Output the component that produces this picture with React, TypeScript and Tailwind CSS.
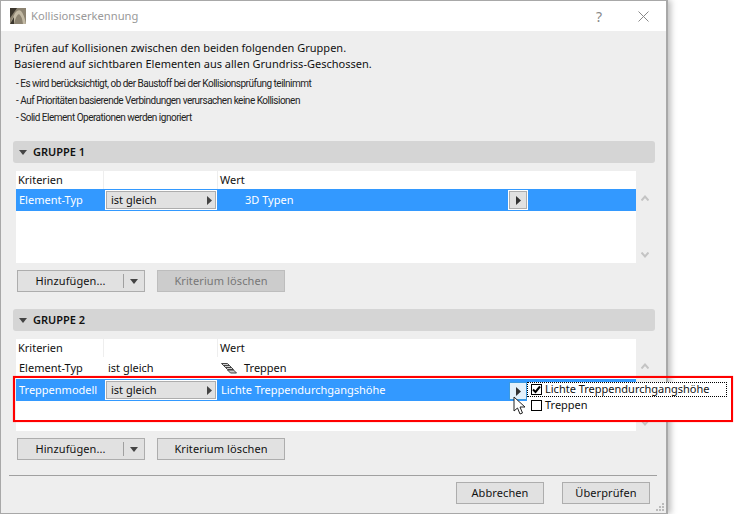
const font = { fontFamily: '"Noto Sans", sans-serif' };

function Tri({ dir = "down", color = "#444" }: { dir?: "down" | "right"; color?: string }) {
  return dir === "down" ? (
    <svg width="8" height="5" viewBox="0 0 8 5"><path d="M0 0h8L4 5z" fill={color} /></svg>
  ) : (
    <svg width="5" height="9" viewBox="0 0 5 9"><path d="M0 0l5 4.5L0 9z" fill={color} /></svg>
  );
}

function Chevrons({ className }: { className: string }) {
  return (
    <div className={`flex flex-col items-center justify-between ${className}`}>
      <svg width="8" height="6" viewBox="0 0 8 6"><path d="M0.5 5.5L4 1.5L7.5 5.5" fill="none" stroke="#c4c4c4" strokeWidth="2" /></svg>
      <svg width="8" height="6" viewBox="0 0 8 6"><path d="M0.5 0.5L4 4.5L7.5 0.5" fill="none" stroke="#c4c4c4" strokeWidth="2" /></svg>
    </div>
  );
}

function Btn({ children, className = "", disabled }: { children: React.ReactNode; className?: string; disabled?: boolean }) {
  return (
    <div className={`h-[22px] flex items-center justify-center border text-[11px] tracking-[0.1px] ${disabled ? "bg-[#cccccc] border-[#bdbdbd] text-[#777]" : "bg-[#e1e1e1] border-[#adadad] text-[#111]"} ${className}`}>
      {children}
    </div>
  );
}

function Select() {
  return (
    <div className="w-[110px] h-[18px] ml-[1px] bg-[#e1e1e1] border border-[#adadad] outline outline-1 outline-white flex items-center justify-between pl-[4px] pr-[3px] text-[11px] text-[#111]">
      <span>ist gleich</span>
      <Tri dir="right" />
    </div>
  );
}

function Head({ title }: { title: string }) {
  return (
    <div className="ml-[12px] w-[642px] h-[22px] rounded-[3px] bg-[#d5d5d5] flex items-center pl-[6px] gap-[6px]">
      <Tri />
      <span className="text-[11px] font-semibold text-[#111]">{title}</span>
    </div>
  );
}

function ColHead() {
  return (
    <div className="flex h-[18px] text-[11px] text-[#111] leading-[18px]">
      <div className="w-[88px] pl-[2px] border-r border-[#eeeeee]">Kriterien</div>
      <div className="w-[114px] border-r border-[#eeeeee]" />
      <div className="pl-[2px]">Wert</div>
    </div>
  );
}

function ArrowBox({ hot }: { hot?: boolean }) {
  return (
    <div className={`w-[18px] h-[18px] flex items-center justify-center border ${hot ? "bg-[#e3f1fb] border-[#3c9ae0]" : "bg-[#e1e1e1] border-[#adadad] outline outline-1 outline-white"}`}>
      <Tri dir="right" color="#333" />
    </div>
  );
}

function AddRow({ disabled }: { disabled?: boolean }) {
  return (
    <div className="flex mt-[7px] ml-[16px] gap-[12px]">
      <div className="w-[128px] h-[22px] flex items-center bg-[#e1e1e1] border border-[#adadad] text-[11px] tracking-[0.1px] text-[#111]">
        <span className="w-[105px] text-center">Hinzufügen...</span>
        <span className="w-px h-[14px] bg-[#a0a0a0]" />
        <span className="flex-1 flex justify-center"><Tri /></span>
      </div>
      <Btn disabled={disabled} className="w-[128px]">Kriterium löschen</Btn>
    </div>
  );
}

export default function App() {
  return (
    <div className="relative w-[734px] h-[514px] bg-white overflow-hidden" style={font}>
      <div className="w-[668px] h-[514px] bg-[#eeeeee] border border-[#a8a8a8] border-r-2 shadow-[3px_0_6px_rgba(0,0,0,0.25)] flex flex-col">
        <div className="h-[30px] shrink-0 bg-white flex items-center pl-[9px] pr-[17px]">
          <svg width="16" height="16" viewBox="0 0 16 16">
            <rect width="16" height="16" fill="#8c8371" />
            <path d="M0 16L5 5Q8 1 11 3Q14 6 16 16H13Q12 8 9 6Q6 7 4 16z" fill="#c2b9a4" />
            <path d="M0 0h7L0 10z" fill="#3a352c" />
            <path d="M0 16L4 9V16z" fill="#3a352c" />
          </svg>
          <span className="ml-[5px] text-[11.2px] text-[#999]">Kollisionserkennung</span>
          <span className="ml-auto text-[14px] text-[#888] mr-[36px]">?</span>
          <svg width="11" height="11" viewBox="0 0 11 11"><path d="M0.5 0.5l10 10M10.5 0.5l-10 10" stroke="#888" strokeWidth="1" /></svg>
        </div>

        <div className="pl-[13px] pt-[9px] text-[11px] leading-[16px] text-[#111]">
          <div>Prüfen auf Kollisionen zwischen den beiden folgenden Gruppen.</div>
          <div>Basierend auf sichtbaren Elementen aus allen Grundriss-Geschossen.</div>
        </div>
        <div className="pl-[15px] pt-[3px] text-[10px] tracking-[-0.5px] text-[#222] flex flex-col" style={{ fontFamily: "Roboto, sans-serif" }}>
          <div className="h-[17px] leading-[17px]">- Es wird berücksichtigt, ob der Baustoff bei der Kollisionsprüfung teilnimmt</div>
          <div className="h-[17px] leading-[17px]">- Auf Prioritäten basierende Verbindungen verursachen keine Kollisionen</div>
          <div className="h-[17px] leading-[17px]">- Solid Element Operationen werden ignoriert</div>
        </div>

        <div className="mt-[15px]"><Head title="GRUPPE 1" /></div>
        <div className="flex mt-[8px]">
          <div className="ml-[15px] w-[620px] h-[92px] bg-white">
            <ColHead />
            <div className="h-[22px] bg-[#3399ff] flex items-center text-[11px] text-white">
              <div className="w-[89px] pl-[3px]">Element-Typ</div>
              <Select />
              <div className="w-[293px] pl-[29px]">3D Typen</div>
              <ArrowBox />
            </div>
          </div>
          <Chevrons className="w-[18px] h-[63px] mt-[24px]" />
        </div>
        <AddRow disabled />

        <div className="mt-[17px]"><Head title="GRUPPE 2" /></div>
        <div className="flex mt-[8px]">
          <div className="ml-[15px] w-[620px] h-[92px] bg-white">
            <ColHead />
            <div className="h-[22px] flex items-center text-[11px] text-[#111]">
              <div className="w-[89px] pl-[3px]">Element-Typ</div>
              <div className="w-[113px] pl-[3px]">ist gleich</div>
              <div className="pl-[3px] flex items-center gap-[6px]">
                <svg width="17" height="12" viewBox="0 0 17 12" fill="#ccc" stroke="#444" strokeWidth="1">
                  <path d="M0.5 1.5h6l2 2h-6zM2.5 3.5h6l2 2h-6zM4.5 5.5h6l2 2h-6zM6.5 8h6l3 3h-6z" />
                </svg>
                Treppen
              </div>
            </div>
            <div className="h-[22px] bg-[#3399ff] flex items-center text-[11px] text-white">
              <div className="w-[89px] pl-[3px]">Treppenmodell</div>
              <Select />
              <div className="w-[290px] pl-[5px]">Lichte Treppendurchgangshöhe</div>
            </div>
          </div>
          <Chevrons className="w-[18px] h-[63px] mt-[24px]" />
        </div>
        <AddRow />

        <div className="mt-[15px] ml-[8px] w-[648px] h-px bg-[#a0a0a0]" />
        <div className="flex justify-end mt-[6px] pr-[16px] gap-[18px]">
          <Btn className="w-[88px]">Abbrechen</Btn>
          <Btn className="w-[88px]">Überprüfen</Btn>
        </div>
      </div>

      {/* popup list, hover arrow, annotation and cursor lie over the dialog */}
      <div className="absolute left-[509px] top-[382px]"><ArrowBox hot /></div>
      <div className="absolute left-[527px] top-[382px] w-[205px] h-[39px] bg-white text-[11px] text-[#111]">
        <div className="flex items-center w-[200px] h-[15px] border border-dotted border-black pl-[3px] gap-[3px]">
          <span className="w-[11px] h-[11px] border border-black flex items-center justify-center">
            <svg width="9" height="9" viewBox="0 0 9 9"><path d="M1 4.5L3.5 7L8 1.5" fill="none" stroke="#000" strokeWidth="2" /></svg>
          </span>
          Lichte Treppendurchgangshöhe
        </div>
        <div className="flex items-center h-[14px] mt-[1px] pl-[4px] gap-[3px]">
          <span className="w-[11px] h-[11px] border border-black" />
          Treppen
        </div>
      </div>
      <div className="absolute left-[13px] top-[376px] w-[720px] h-[46px] border-2 border-[#ff0000] shadow-[0_0_1px_rgba(255,0,0,0.5)]" />
      <svg className="absolute left-[513px] top-[396px]" width="14" height="20" viewBox="0 0 14 20">
        <path d="M1 1v14l3.5-3 2.5 6 2.5-1-2.5-6h5z" fill="#fff" stroke="#222" strokeWidth="1" />
      </svg>
      <svg className="absolute left-[656px] top-[503px]" width="9" height="9" viewBox="0 0 9 9" fill="#bbb">
        <rect x="6" y="0" width="2" height="2" /><rect x="3" y="3" width="2" height="2" /><rect x="6" y="3" width="2" height="2" />
        <rect x="0" y="6" width="2" height="2" /><rect x="3" y="6" width="2" height="2" /><rect x="6" y="6" width="2" height="2" />
      </svg>
    </div>
  );
}
